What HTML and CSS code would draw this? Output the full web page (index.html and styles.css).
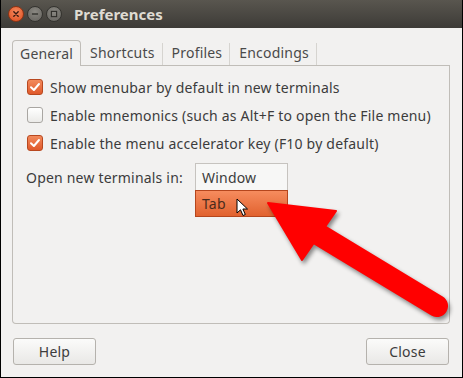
FILE: index.html
```html
<!DOCTYPE html>
<html>
<head>
<meta charset="utf-8">
<link rel="stylesheet" href="styles.css">
</head>
<body>
<div class="window">
  <div class="titlebar">
    <div class="wbtns">
      <span class="wb close"><svg width="16" height="16" viewBox="0 0 16 16"><path d="M5.5 5.5 L10.5 10.5 M10.5 5.5 L5.5 10.5" stroke="#3a1a10" stroke-width="1.6" stroke-linecap="round"/></svg></span>
      <span class="wb"><svg width="16" height="16" viewBox="0 0 16 16"><path d="M4.5 8 H11.5" stroke="#2f2e2a" stroke-width="1.5"/></svg></span>
      <span class="wb"><svg width="16" height="16" viewBox="0 0 16 16"><rect x="5" y="5" width="6" height="6" fill="none" stroke="#2f2e2a" stroke-width="1.3"/></svg></span>
    </div>
    <div class="title">Preferences</div>
  </div>
  <div class="body">
    <div class="tabs">
      <div class="tab active">General</div>
      <div class="tab">Shortcuts</div>
      <div class="tab">Profiles</div>
      <div class="tab">Encodings</div>
      <div class="tab-fill"></div>
    </div>
    <div class="panel">
      <label class="row"><span class="cb checked"><svg width="16" height="16" viewBox="0 0 16 16"><path d="M4 8.3 L6.9 11 L12 5" fill="none" stroke="#fff" stroke-width="2" stroke-linecap="round" stroke-linejoin="round"/></svg></span>Show menubar by default in new terminals</label>
      <label class="row"><span class="cb"></span>Enable mnemonics (such as Alt+F to open the File menu)</label>
      <label class="row"><span class="cb checked"><svg width="16" height="16" viewBox="0 0 16 16"><path d="M4 8.3 L6.9 11 L12 5" fill="none" stroke="#fff" stroke-width="2" stroke-linecap="round" stroke-linejoin="round"/></svg></span>Enable the menu accelerator key (F10 by default)</label>
      <div class="row open">Open new terminals in:</div>
    </div>
    <div class="buttons">
      <button class="btn">Help</button>
      <button class="btn">Close</button>
    </div>
  </div>
  <div class="menu">
    <div class="item">Window</div>
    <div class="item sel">Tab</div>
  </div>
  <svg class="cursor" width="14" height="20" viewBox="0 0 14 20"><path d="M1 1 L1 15 L4.5 11.8 L7 17.5 L9.3 16.5 L6.9 11 L11.5 11 Z" fill="#fff" stroke="#000" stroke-width="1" stroke-linejoin="round"/></svg>
  <svg class="arrow" width="463" height="378" viewBox="0 0 463 378">
    <g fill="#ff0000" stroke="#ff0000">
      <line x1="318" y1="234" x2="437" y2="306" stroke-width="22" stroke-linecap="round"/>
      <polygon points="268,203 336,211 302,260" stroke-width="2" stroke-linejoin="round"/>
    </g>
  </svg>
</div>
</body>
</html>
```
FILE: styles.css
```css
* { box-sizing: border-box; }
html, body { margin: 0; padding: 0; }
body {
  width: 463px; height: 378px; overflow: hidden;
  font-family: "Noto Sans", "Open Sans", sans-serif;
  color: #3c3c3c;
  letter-spacing: 0.2px;
}
.window {
  position: relative;
  width: 463px; height: 378px;
  border: 1px solid #000; border-top: none;
  background: #f2f1f0;
  display: flex; flex-direction: column;
}
.titlebar {
  height: 28px; flex: none;
  background: linear-gradient(#59564f, #3d3b37);
  display: flex; align-items: center;
  padding-left: 7px;
}
.wbtns { display: flex; gap: 3px; }
.wb {
  width: 16px; height: 16px; border-radius: 50%;
  background: radial-gradient(circle at 50% 35%, #8a8882, #63615c);
  border: 1px solid #34332f;
  display: flex; align-items: center; justify-content: center;
}
.wb.close {
  background: radial-gradient(circle at 50% 35%, #f58a5e, #dd4c1e);
  border-color: #8e3414;
}
.title {
  margin-left: 12px;
  color: #dfdbd2; font-weight: bold; font-size: 15px;
  letter-spacing: 0;
}
.body { padding: 12px 12px 0 11px; flex: 1; display: flex; flex-direction: column; }
.tabs { display: flex; height: 26px; font-size: 14px; }
.tab {
  padding: 0 8px 0 9px; display: flex; align-items: center;
  border-bottom: 1px solid #c0bdb8;
  position: relative;
  color: #4a4a4a;
}
.tab:not(.active)::after {
  content: ""; position: absolute; right: 0; top: 3px; bottom: 0;
  width: 1px; background: #d6d4d0;
}
.tab.active {
  border: 1px solid #c0bdb8; border-bottom: none;
  border-radius: 4px 4px 0 0;
  padding: 0 7px 0 7px;
}
.tab-fill { flex: 1; border-bottom: 1px solid #c0bdb8; }
.panel {
  height: 258px;
  border: 1px solid #c0bdb8; border-top: none;
  border-radius: 0 0 4px 4px;
  padding: 7px 13px 0 13px;
  font-size: 14px;
}
.row { height: 28px; display: flex; align-items: center; gap: 7px; }
.cb {
  width: 16px; height: 16px; flex: none; margin-left: 1px;
  border: 1px solid #a9a6a2; border-radius: 3px;
  background: linear-gradient(#ffffff, #ebeae8);
  display: flex; align-items: center; justify-content: center;
}
.cb.checked {
  border-color: #b8481f;
  background: linear-gradient(#f28a5c, #e0592b);
}
.cb.checked svg { margin: -1px; }
.open { margin-top: 6px; }
.buttons {
  display: flex; justify-content: space-between;
  margin-top: 14px; padding: 0 1px 0 1px;
}
.btn {
  width: 83px; height: 27px;
  font-family: inherit; font-size: 14px; color: #3c3c3c;
  letter-spacing: 0.2px;
  border: 1px solid #b5b2ad; border-radius: 3px;
  background: linear-gradient(#fbfbfa, #e9e8e6);
  padding: 0;
}
.menu {
  position: absolute; left: 194px; top: 163px;
  width: 93px;
  font-size: 14px;
}
.item { height: 27px; display: flex; align-items: center; padding-left: 6px; }
.menu .item:first-child {
  background: #f7f7f6; border: 1px solid #c6c3bf; border-bottom: none;
}
.item.sel {
  background: linear-gradient(#f68c5e, #e1622f);
  border: 1px solid #b5461d;
  color: #4a2b1c;
}
.cursor { position: absolute; left: 235px; top: 198px; }
.arrow {
  position: absolute; left: -1px; top: 0;
  filter: drop-shadow(2px 3px 2px rgba(0,0,0,0.45));
  pointer-events: none;
}
```
